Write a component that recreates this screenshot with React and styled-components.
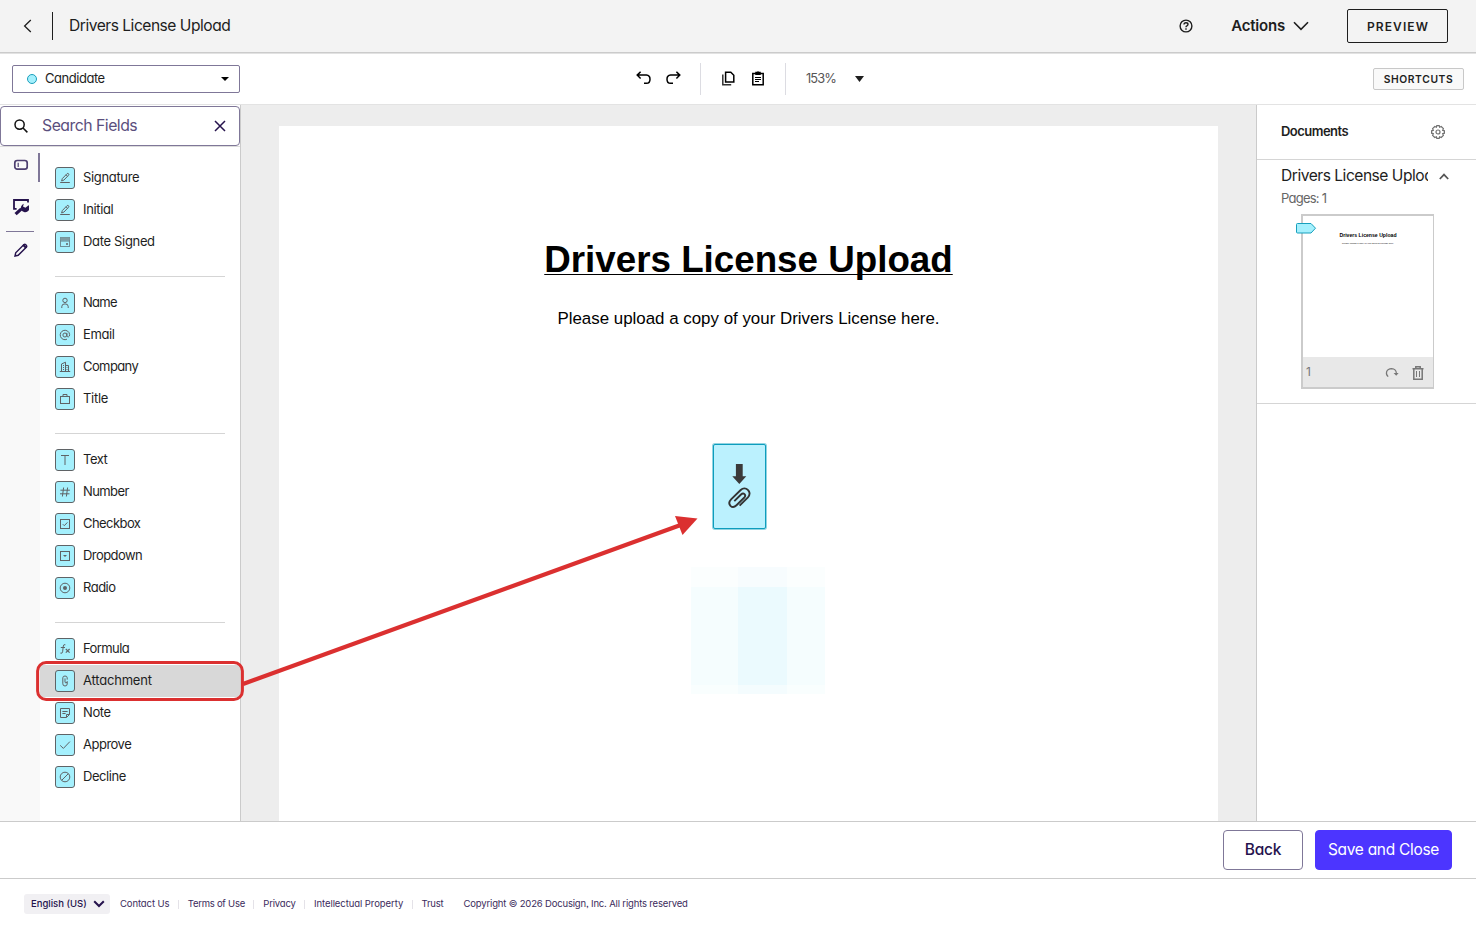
import React from "react";
import styled, { createGlobalStyle, css } from "styled-components";

const Global = createGlobalStyle`
  *, *::before, *::after { box-sizing: border-box; }
  html, body { margin: 0; padding: 0; height: 100%; overflow: hidden; }
  body {
    font-family: Inter, "Open Sans", sans-serif;
    font-feature-settings: "cv11" 1, "ss03" 1;
    color: #1e1e1e;
    background: #fff;
  }
  button { font: inherit; font-feature-settings: inherit; color: inherit; background: none; border: 0; padding: 0; margin: 0; }
  svg { display: block; flex: none; }
`;

const Shell = styled.div`
  position: relative;
  width: 1476px;
  height: 929px;
  display: flex;
  flex-direction: column;
  overflow: hidden;
`;

const Text = styled.span`
  font-size: ${(p) => p.$size || 13}px;
  font-weight: ${(p) => p.$weight || 400};
  letter-spacing: ${(p) => p.$track || 0}px;
  color: ${(p) => p.$color || "inherit"};
  padding-bottom: ${(p) => p.$raise || 0}px;
  line-height: 20px;
  white-space: nowrap;
`;

const Header = styled.header`
  flex: none;
  height: 54px;
  padding: 0 28px 1px 20px;
  display: flex;
  align-items: center;
  background: #f3f3f3;
  border-bottom: 1px solid #e2e2e2;
  box-shadow: inset 0 -1px 0 #cbcbcb;
`;
const HeaderRule = styled.i`
  width: 1px;
  height: 28px;
  margin: 0 16px 0 17px;
  background: #1e1e1e;
`;
const HeaderEnd = styled.div`
  margin-left: auto;
  display: flex;
  align-items: center;
`;
const ActionsButton = styled.button`
  display: flex;
  align-items: center;
  gap: 8px;
  margin: 0 38px 0 38px;
`;
const PreviewButton = styled.button`
  width: 101px;
  height: 34px;
  padding-left: 1px;
  border: 1px solid #1e1e1e;
  border-radius: 2px;
  text-align: center;
`;

const Toolbar = styled.div`
  flex: none;
  height: 51px;
  display: grid;
  grid-template-columns: 624px 1fr auto;
  align-items: center;
  padding: 0 12px;
  border-bottom: 1px solid #e3e3e3;
`;
const RecipientSelect = styled.div`
  width: 228px;
  height: 28px;
  padding: 0 10px 0 14px;
  display: flex;
  align-items: center;
  border: 1px solid #7f7798;
  border-radius: 2px;
  svg { margin-left: auto; }
`;
const Dot = styled.i`
  width: 10px;
  height: 10px;
  margin-right: 8px;
  border: 1px solid #1b9fbb;
  border-radius: 50%;
  background: #a5f0fd;
`;
const Tools = styled.div`
  display: flex;
  align-items: center;
`;
const IconPair = styled.div`
  display: flex;
  gap: 14px;
`;
const ToolRule = styled.i`
  width: 1px;
  height: 32px;
  margin: 0 ${(p) => p.$right}px 0 ${(p) => p.$left}px;
  background: #dcdce2;
`;
const CaretBox = styled.span`
  margin-left: 19px;
`;
const ShortcutsButton = styled.button`
  width: 91px;
  height: 22px;
  display: grid;
  place-items: center;
  border: 1px solid #c8c8c8;
  border-radius: 2px;
  background: #f9f9f9;
`;

const Main = styled.main`
  flex: none;
  height: 717px;
  display: flex;
  border-bottom: 1px solid #cbcbcb;
`;
const Sidebar = styled.aside`
  width: 241px;
  flex: none;
  padding-top: 1px;
  display: flex;
  flex-direction: column;
  border-right: 1px solid #cbcbcb;
`;
const SearchBox = styled.div`
  flex: none;
  height: 40px;
  padding: 0 13px 0 13px;
  display: flex;
  align-items: center;
  gap: 14px;
  border: 1px solid #7f7798;
  border-radius: 4px;
  svg:last-child { margin-left: auto; }
`;
const SidebarBody = styled.div`
  flex: 1;
  display: flex;
  border-top: 1px solid #dcdcdc;
`;
const Rail = styled.nav`
  width: 40px;
  background: #f9f9f9;
  display: flex;
  flex-direction: column;
`;
const RailItem = styled.div`
  height: ${(p) => p.$h}px;
  width: 40px;
  margin-top: ${(p) => p.$top || 0}px;
  padding: 0 0 ${(p) => p.$raise || 0}px 13px;
  display: flex;
  align-items: center;
  border-right: ${(p) => (p.$active ? "2px solid #7f7798" : "0")};
`;
const RailRule = styled.i`
  height: 1px;
  margin: 15px 6px 3px;
  background: #7f7798;
`;
const FieldList = styled.div`
  flex: 1;
  padding-top: 15px;
`;
const Group = styled.section`
  & + &::before {
    content: "";
    display: block;
    height: 1px;
    margin: 18px 15px 10px;
    background: #d5d5d5;
  }
`;
const Field = styled.div`
  height: 32px;
  padding-left: 15px;
  display: flex;
  align-items: center;
  gap: 8px;
  ${(p) => p.$selected && css`position: relative; background: #d8d8d8; margin-right: -2px;`}
`;
const FieldIcon = styled.span`
  width: 20px;
  height: 22px;
  display: grid;
  place-items: center;
  border: 1px solid #5f6366;
  border-radius: 3px;
  background: #a5f0fd;
`;

const Canvas = styled.div`
  flex: 1;
  padding: 21px 38px 0;
  background: #ededed;
`;
const Sheet = styled.article`
  height: 100%;
  width: 939px;
  margin: 0 auto;
  padding-top: 111px;
  position: relative;
  background: #fff;
  text-align: center;
  font-family: "Liberation Sans", Arial, sans-serif;
  color: #000;
`;
const SheetTitle = styled.h1`
  margin: 0;
  font-size: 36.75px;
  line-height: 46px;
  font-weight: 700;
  text-decoration: underline;
  text-decoration-thickness: 1px;
  text-underline-offset: 2px;
  text-decoration-skip-ink: none;
`;
const SheetText = styled.p`
  margin: 25px 0 0;
  font-size: 16.9px;
  line-height: 22px;
`;
const DroppedField = styled.div`
  position: absolute;
  left: 434px;
  top: 318px;
  width: 53px;
  height: 85px;
  padding-top: 19px;
  display: flex;
  flex-direction: column;
  align-items: center;
  gap: 3px;
  border: 1px solid #0d9dbd;
  border-radius: 2px;
  box-shadow: 0 0 0 1px rgba(13, 157, 189, 0.45);
  background: #bbf1fe;
`;
const Mosaic = styled.div`
  position: absolute;
  left: 412px;
  top: 441px;
  display: grid;
  grid-template-columns: 47px 49px 38px;
  grid-template-rows: 20px 98px 9px;
`;
const Tile = styled.i`
  background: ${(p) => p.$tone};
`;

const DocPanel = styled.aside`
  width: 220px;
  flex: none;
  border-left: 1px solid #cbcbcb;
`;
const DocPanelHead = styled.div`
  height: 55px;
  padding: 0 31px 1px 24px;
  display: flex;
  align-items: center;
  justify-content: space-between;
  border-bottom: 1px solid #d5d5d5;
`;
const DocEntry = styled.div`
  height: 244px;
  padding: 6px 0 0 24px;
  border-bottom: 1px solid #d5d5d5;
`;
const DocTitle = styled.div`
  display: flex;
  align-items: center;
  gap: 11px;
  ${Text} { width: 147px; overflow: hidden; }
`;
const PageCount = styled.div`
  height: 24px;
  padding-top: 2px;
  display: flex;
`;
const Thumb = styled.div`
  position: relative;
  width: 133px;
  height: 175px;
  margin: 4px 0 0 20px;
  display: flex;
  flex-direction: column;
  border: 2px solid #cbcbcb;
  border-right-width: 1px;
`;
const ThumbPage = styled.div`
  flex: 1;
  padding-top: 15px;
  text-align: center;
  font-family: "Liberation Sans", Arial, sans-serif;
  color: #000;
`;
const ThumbTitle = styled.div`
  font-size: 5.15px;
  font-weight: 700;
  line-height: 8px;
`;
const ThumbText = styled.div`
  font-size: 2.3px;
  line-height: 8px;
`;
const ThumbFoot = styled.div`
  height: 30px;
  padding: 1px 9px 0 3px;
  display: flex;
  align-items: center;
  gap: 13px;
  background: #e8e8e8;
  ${Text} { margin-right: auto; }
`;
const ThumbTag = styled.svg`
  position: absolute;
  left: -7px;
  top: 7px;
`;

const ActionBar = styled.div`
  flex: none;
  height: 57px;
  padding: 8px 24px;
  display: flex;
  justify-content: flex-end;
  gap: 12px;
  border-bottom: 1px solid #cbcbcb;
`;
const BarButton = styled.button`
  width: ${(p) => p.$w}px;
  height: 40px;
  padding-bottom: 2px;
  border-radius: 4px;
  border: 1px solid ${(p) => (p.$primary ? "#4c35ff" : "#7f7798")};
  background: ${(p) => (p.$primary ? "#4c35ff" : "#fff")};
  color: ${(p) => (p.$primary ? "#fff" : "#26134d")};
`;

const Footer = styled.footer`
  flex: 1;
  padding: 15px 24px 0;
  display: flex;
  align-items: flex-start;
  color: #3b2b5c;
`;
const Language = styled.button`
  width: 86px;
  height: 20px;
  margin-right: 10px;
  padding: 0 5px 0 7px;
  display: flex;
  align-items: center;
  justify-content: space-between;
  border-radius: 3px;
  background: #f1f0f3;
  color: #26134d;
`;
const FootLink = styled.a`
  display: flex;
  align-items: center;
  &:not(:nth-of-type(1))::before {
    content: "";
    width: 1px;
    height: 9px;
    margin: 0 9px 0 8.4px;
    background: #e4e2e8;
  }
`;
const Copyright = styled.span`
  margin-left: 20px;
  display: flex;
`;

const Annotation = styled.svg`
  position: absolute;
  left: 0;
  top: 0;
  pointer-events: none;
`;

function Glyph({ w = 12, h = 12, sw = 1, color = "#5f6366", children }) {
  return (
    <svg width={w} height={h} viewBox={`0 0 ${w} ${h}`} fill="none" stroke={color} strokeWidth={sw}>
      {children}
    </svg>
  );
}

const pen = (
  <>
    <path d="M2.6 9 L3.3 6.6 L8 1.7 Q8.8 1 9.6 1.8 Q10.2 2.6 9.4 3.4 L4.9 8.1 Z M7 2.8 L8.5 4.3" />
    <path d="M1.2 10.5 H10.8" />
  </>
);

const icons = {
  sign: pen,
  date: (
    <>
      <rect x="1.5" y="1.5" width="9" height="9" stroke="#6f8f96" />
      <path d="M1.5 3 H10.5" strokeWidth="3" stroke="#7f9ba1" />
      <path d="M1.5 5 H10.5" stroke="#5f7f86" />
      <path d="M7 8 H9" strokeWidth="1.6" />
    </>
  ),
  name: (
    <>
      <circle cx="6" cy="3.4" r="2.2" />
      <path d="M2.8 11 V9.4 Q2.8 6.9 6 6.9 Q9.2 6.9 9.2 9.4 V11" />
    </>
  ),
  email: (
    <>
      <circle cx="5.9" cy="6" r="2" />
      <path d="M7.9 3.8 V6.8 Q8.2 8.1 9.4 7.9 Q10.8 7.4 10.6 5.4 A4.7 4.7 0 1 0 8 10.2" />
    </>
  ),
  company: (
    <>
      <path d="M0.8 10.5 H11.2 M2.5 10.5 V3 L6.5 1.2 V10.5 M6.5 4.5 H9.5 V10.5" />
      <path d="M4.5 4 V5 M4.5 6 V7 M4.5 8 V9 M8 6.2 V7 M8 8 V9" />
    </>
  ),
  title: (
    <>
      <rect x="1.5" y="3.5" width="9" height="7" />
      <path d="M4 3.5 V1.5 H8 V3.5" />
    </>
  ),
  text: <path d="M2 1.5 H10 M6 1.5 V11" />,
  number: <path d="M4.6 1.5 L3.4 10.5 M8.6 1.5 L7.4 10.5 M1.4 4.2 H10.9 M1 7.8 H10.5" />,
  checkbox: (
    <>
      <rect x="1.5" y="1.5" width="9" height="9" />
      <path d="M3.8 6.2 L5.3 7.7 L8.4 4.4" />
    </>
  ),
  dropdown: (
    <>
      <rect x="1.5" y="1.5" width="9" height="9" />
      <path d="M4 5 H8 L6 7 Z" fill="#5f6366" stroke="none" />
    </>
  ),
  radio: (
    <>
      <circle cx="6" cy="6" r="4.8" />
      <circle cx="6" cy="6" r="2" fill="#5f6366" stroke="none" />
    </>
  ),
  formula: (
    <>
      <path d="M6.4 1.8 Q4.6 1 4.3 3 L3.6 8.8 Q3.3 10.9 1.4 10.1 M1.8 4.5 H6" />
      <path d="M6.8 6 L10.6 9.6 M10.6 6 L6.8 9.6" strokeWidth="1.2" />
    </>
  ),
  attachment: (
    <path d="M8.2 4.6 V2.8 Q8.2 1 6 1 Q3.8 1 3.8 2.8 V8.8 Q3.8 11 6 11 Q8.2 11 8.2 9 V6.2 M8.2 7.4 Q6 8.6 6 7 V3.4" />
  ),
  note: (
    <>
      <path d="M1.5 1.5 H10.5 V7.5 L7.5 10.5 H1.5 Z M7.5 10.3 V7.5 H10.5" />
      <path d="M3.4 4.5 H8.6 M3.4 6.5 H6.6" />
    </>
  ),
  approve: <path d="M1.2 6.4 L4.4 9.4 L10.9 2.6" />,
  decline: (
    <>
      <circle cx="6" cy="6" r="4.8" />
      <path d="M2.7 9.3 L9.3 2.7" />
    </>
  ),
};

/* label, icon, letter spacing */
const groups = [
  [["Signature", "sign", -0.34], ["Initial", "sign", -0.36], ["Date Signed", "date", -0.33]],
  [["Name", "name", -0.7], ["Email", "email", -0.4], ["Company", "company", -0.6], ["Title", "title", -0.3]],
  [["Text", "text", -0.5], ["Number", "number", -0.6], ["Checkbox", "checkbox", -0.56], ["Dropdown", "dropdown", -0.55], ["Radio", "radio", -0.5]],
  [["Formula", "formula", -0.6], ["Attachment", "attachment", -0.2], ["Note", "note", -0.4], ["Approve", "approve", -0.5], ["Decline", "decline", -0.45]],
];

const links = [
  ["Contact Us", -0.1],
  ["Terms of Use", -0.25],
  ["Privacy", -0.2],
  ["Intellectual Property", -0.07],
  ["Trust", -0.2],
];

const tiles = [
  "#fbfefe", "#f7fcfe", "#fbfefe",
  "#f5fdfe", "#ebfafe", "#f5fdfe",
  "#f9fefe", "#f4fcfe", "#f9fefe",
];

function TopHeader() {
  return (
    <Header>
      <Glyph w={15} h={14} sw={1.3} color="#1e1e1e"><path d="M10.8 1 L4.6 7 L10.8 13" /></Glyph>
      <HeaderRule />
      <Text $size={15.6} $track={-0.49}>Drivers License Upload</Text>
      <HeaderEnd>
        <Glyph w={14} h={14} sw={1.4} color="#1e1e1e">
          <circle cx="7" cy="7" r="5.9" />
          <path d="M5 5.6 Q5 3.8 7 3.8 Q9 3.8 9 5.3 Q9 6.2 7.9 6.8 Q7 7.2 7 8.2 M7 9.3 V10.7" />
        </Glyph>
        <ActionsButton>
          <Text $size={15} $weight={600} $track={-0.2}>Actions</Text>
          <Glyph w={16} h={10} sw={1.6} color="#1e1e1e"><path d="M1 1.2 L8 8.4 L15 1.2" /></Glyph>
        </ActionsButton>
        <PreviewButton><Text $size={12} $weight={600} $track={1.1}>PREVIEW</Text></PreviewButton>
      </HeaderEnd>
    </Header>
  );
}

function ToolStrip() {
  return (
    <Toolbar>
      <RecipientSelect>
        <Dot />
        <Text $track={-0.47} $raise={2}>Candidate</Text>
        <Glyph w={8} h={4}><path d="M0 0 H8 L4 4 Z" fill="#000" stroke="none" /></Glyph>
      </RecipientSelect>
      <Tools>
        <IconPair>
          <Glyph w={16} h={16} sw={1.5} color="#000">
            <path d="M4.6 0.7 L1.2 4.1 L4.6 7.5 M1.4 4.1 H10.4 Q14 4.4 14 8.2 Q14 12.3 10.4 12.3 H8" />
          </Glyph>
          <Glyph w={15} h={16} sw={1.5} color="#000">
            <path d="M10.4 0.7 L13.8 4.1 L10.4 7.5 M13.6 4.1 H4.6 Q1 4.4 1 8.2 Q1 12.3 4.6 12.3 H7" />
          </Glyph>
        </IconPair>
        <ToolRule $left={19} $right={20} />
        <IconPair>
          <Glyph w={16} h={16} sw={1.5} color="#000">
            <path d="M4.6 1.3 H9.8 L12.8 4.3 V10.9 H4.6 Z" />
            <path d="M1.8 3.5 V13.7 H10.2" stroke="#333" />
          </Glyph>
          <Glyph w={15} h={16} sw={1.5} color="#000">
            <path d="M1.8 2.6 H12.2 V13.8 H1.8 Z" />
            <path d="M5 1.5 H9 V3.2 H5 Z" fill="#000" />
            <path d="M7 0.2 V2.2 M4 6.5 H10 M4 8.5 H10 M4 10.5 H8" strokeWidth="1" />
          </Glyph>
        </IconPair>
        <ToolRule $left={19} $right={20} />
        <Text $size={12.8} $track={-0.85} $raise={1} $color="#555">153%</Text>
        <CaretBox>
          <Glyph w={9} h={6}><path d="M0 0 H9 L4.5 6 Z" fill="#1e1e1e" stroke="none" /></Glyph>
        </CaretBox>
      </Tools>
      <ShortcutsButton><Text $size={10.3} $weight={600} $track={0.6}>SHORTCUTS</Text></ShortcutsButton>
    </Toolbar>
  );
}

function FieldSidebar() {
  return (
    <Sidebar>
      <SearchBox>
        <Glyph w={14} h={14} sw={1.5} color="#111">
          <circle cx="5.6" cy="5.6" r="4.6" /><path d="M9 9 L13.4 13.4" />
        </Glyph>
        <Text $size={15.8} $track={-0.5} $color="#5b4f7d">Search Fields</Text>
        <Glyph w={12} h={12} sw={1.5} color="#26134d"><path d="M1 1 L11 11 M11 1 L1 11" /></Glyph>
      </SearchBox>
      <SidebarBody>
        <Rail>
          <RailItem $h={29} $top={6} $raise={6} $active>
            <Glyph w={16} h={12} sw={1.7} color="#4d3f70">
              <rect x="1.8" y="1.5" width="12.4" height="8.6" rx="2.4" />
              <path d="M5.2 3.7 V7.9" strokeWidth="1.2" />
            </Glyph>
          </RailItem>
          <RailItem $h={17} $top={17}>
            <Glyph w={16} h={17} sw={1.8} color="#26134d">
              <path d="M3.6 9.8 H1 V1 H15 V3.6" />
              <path d="M2.6 15.2 L8.4 9.8" strokeWidth="3.2" />
              <path d="M15.6 6.2 A4.3 4.3 0 1 1 10.8 4.8 L10 7.6 L12.4 8.8 Z" fill="#26134d" stroke="none" />
            </Glyph>
          </RailItem>
          <RailRule />
          <RailItem $h={30}>
            <Glyph w={16} h={16} sw={1.4} color="#26134d">
              <path d="M2 14 L2.7 10.8 L11 2.5 Q11.8 1.9 12.6 2.6 L13.4 3.4 Q14.1 4.2 13.5 5 L5.2 13.3 Z" />
              <path d="M10 2.8 L13.2 6" strokeWidth="2" />
            </Glyph>
          </RailItem>
        </Rail>
        <FieldList>
          {groups.map((rows) => (
            <Group key={rows[0][0]}>
              {rows.map(([label, icon, track]) => (
                <Field key={label} $selected={label === "Attachment"}>
                  <FieldIcon><Glyph>{icons[icon]}</Glyph></FieldIcon>
                  <Text $track={track} $raise={2}>{label}</Text>
                </Field>
              ))}
            </Group>
          ))}
        </FieldList>
      </SidebarBody>
    </Sidebar>
  );
}

function DocumentSheet() {
  return (
    <Canvas>
      <Sheet>
        <SheetTitle>Drivers License Upload</SheetTitle>
        <SheetText>Please upload a copy of your Drivers License here.</SheetText>
        <DroppedField>
          <Glyph w={15} h={20}><path d="M3.9 0 H10.7 V12.2 H14.3 L7.3 20 L0.3 12.2 H3.9 Z" fill="#3a3a3a" stroke="none" /></Glyph>
          <Glyph w={23} h={22} sw={1.9} color="#333">
            <path d="M11.6 18.6 L19.9 10.3 C22.5 7.4 21.7 4.4 19.9 2.9 C17.9 1 14.9 0.9 12.7 3 L3.1 12.3 C0.9 14.6 1 17.2 2.5 18.8 C4.1 20.4 6.5 20.2 8.5 18.3 L16.1 10.8 C17.3 9.6 17.5 8.2 16.5 7.2 C15.5 6.2 14.2 6.4 13 7.5 L6.3 14.2" />
          </Glyph>
        </DroppedField>
        <Mosaic>{tiles.map((tone, i) => <Tile key={i} $tone={tone} />)}</Mosaic>
      </Sheet>
    </Canvas>
  );
}

function DocumentsPanel() {
  return (
    <DocPanel>
      <DocPanelHead>
        <Text $weight={600} $track={-0.52} $raise={1}>Documents</Text>
        <Glyph w={14} h={14} sw={1.2} color="#707070">
          <path d="M5.8 0.6 H8.2 L8.6 2.2 L10.2 1.5 L12.4 3.7 L11.7 5.3 L13.4 5.8 V8.2 L11.7 8.7 L12.4 10.3 L10.2 12.5 L8.6 11.8 L8.2 13.4 H5.8 L5.4 11.8 L3.8 12.5 L1.6 10.3 L2.3 8.7 L0.6 8.2 V5.8 L2.3 5.3 L1.6 3.7 L3.8 1.5 L5.4 2.2 Z" />
          <circle cx="7" cy="7" r="2" />
        </Glyph>
      </DocPanelHead>
      <DocEntry>
        <DocTitle>
          <Text $size={15.6} $track={-0.49}>Drivers License Upload</Text>
          <Glyph w={10} h={7} sw={1.7} color="#555"><path d="M0.8 6 L5 1.6 L9.2 6" /></Glyph>
        </DocTitle>
        <PageCount><Text $track={-0.75} $color="#666">Pages: 1</Text></PageCount>
        <Thumb>
          <ThumbPage>
            <ThumbTitle>Drivers License Upload</ThumbTitle>
            <ThumbText>Please upload a copy of your Drivers License here.</ThumbText>
          </ThumbPage>
          <ThumbFoot>
            <Text $size={12} $raise={1} $color="#777">1</Text>
            <Glyph w={14} h={14} sw={1.2} color="#777">
              <path d="M3.2 10.6 Q0.8 8.6 1.6 5.8 Q2.8 2.6 6.6 2.6 Q11 2.8 11.4 7.2" />
              <path d="M8.6 7 H13.6 L11.2 9.8 Z" fill="#777" stroke="none" />
            </Glyph>
            <Glyph w={12} h={14} sw={1.5} color="#777">
              <path d="M0.5 2.7 H11.5 M3.8 2.5 V0.8 H8.2 V2.5 M1.8 3 V13.2 H10.2 V3" />
              <path d="M4.5 5 V11 M7.5 5 V11" strokeWidth="1" />
            </Glyph>
          </ThumbFoot>
          <ThumbTag width="21" height="11" viewBox="0 0 21 11">
            <path d="M0.5 1.5 Q0.5 0.5 1.5 0.5 H15 L19.5 5.2 L15 10 H1.5 Q0.5 10 0.5 9 Z" fill="#a5f0fd" stroke="#17a0bd" />
          </ThumbTag>
        </Thumb>
      </DocEntry>
    </DocPanel>
  );
}

export default function App() {
  return (
    <>
      <Global />
      <Shell>
        <TopHeader />
        <ToolStrip />
        <Main>
          <FieldSidebar />
          <DocumentSheet />
          <DocumentsPanel />
        </Main>
        <ActionBar>
          <BarButton $w={80}><Text $size={15.5} $weight={500} $track={-0.2}>Back</Text></BarButton>
          <BarButton $w={137} $primary><Text $size={15.5} $track={-0.3}>Save and Close</Text></BarButton>
        </ActionBar>
        <Footer>
          <Language>
            <Text $size={9.5} $weight={500}>English (US)</Text>
            <Glyph w={12} h={8} sw={2} color="#26134d"><path d="M1.2 1.2 L6 6 L10.8 1.2" /></Glyph>
          </Language>
          {links.map(([label, track]) => (
            <FootLink key={label}><Text $size={9.5} $track={track}>{label}</Text></FootLink>
          ))}
          <Copyright><Text $size={9.5} $track={-0.17}>Copyright © 2026 Docusign, Inc. All rights reserved</Text></Copyright>
        </Footer>
        <Annotation width="1476" height="929" viewBox="0 0 1476 929" fill="none">
          <rect x="37.6" y="662.5" width="204.8" height="37" rx="8.5" stroke="#db3030" strokeWidth="3" />
          <path d="M243 684 L682 524.5" stroke="#db3030" strokeWidth="4.4" />
          <path d="M675 516 L697.5 518.5 L682.5 535 Z" fill="#db3030" />
        </Annotation>
      </Shell>
    </>
  );
}
